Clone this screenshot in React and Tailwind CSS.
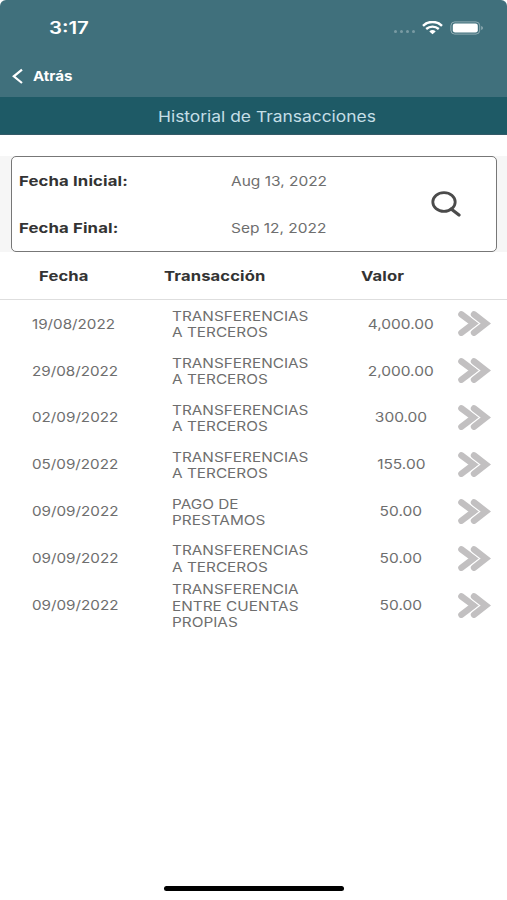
const rows = [
  { date: "19/08/2022", lines: ["TRANSFERENCIAS", "A TERCEROS"], value: "4,000.00" },
  { date: "29/08/2022", lines: ["TRANSFERENCIAS", "A TERCEROS"], value: "2,000.00" },
  { date: "02/09/2022", lines: ["TRANSFERENCIAS", "A TERCEROS"], value: "300.00" },
  { date: "05/09/2022", lines: ["TRANSFERENCIAS", "A TERCEROS"], value: "155.00" },
  { date: "09/09/2022", lines: ["PAGO DE", "PRESTAMOS"], value: "50.00" },
  { date: "09/09/2022", lines: ["TRANSFERENCIAS", "A TERCEROS"], value: "50.00" },
  { date: "09/09/2022", lines: ["TRANSFERENCIA", "ENTRE CUENTAS", "PROPIAS"], value: "50.00" },
];

function StatusBar() {
  return (
    <div className="flex h-[55px] items-center pr-[23px] pl-[49px] text-white">
      <span className="origin-left scale-x-[1.2] pt-[2px] text-[17px] font-semibold">3:17</span>
      <div className="ml-auto flex items-center">
        <div className="mt-2 mr-[7px] flex gap-[3px]">
          {[0, 1, 2, 3].map((i) => (
            <i key={i} className="h-[3px] w-[3px] rounded-full bg-white/30" />
          ))}
        </div>
        <svg className="mr-[7px] h-[14px] w-[21px]" viewBox="0 0 21 14" fill="none" stroke="white">
          <path d="M1 4.8C6.4-.3 14.6-.3 20 4.8" strokeWidth="2.5" />
          <path d="M4.2 8C7.9 4.8 13.1 4.8 16.8 8" strokeWidth="2.4" />
          <path d="M7.3 10.4Q10.5 7.8 13.7 10.4L10.5 13.3Z" fill="white" stroke="none" />
        </svg>
        <svg className="h-[14px] w-[34px]" viewBox="0 0 34 14">
          <rect x=".9" y=".9" width="28.8" height="12.2" rx="3.8" fill="none" stroke="white" strokeOpacity=".42" />
          <rect x="2.8" y="2.5" width="25" height="9" rx="2.3" fill="white" />
          <path d="M31.3 5v4q1.5-.6 1.5-2t-1.5-2" fill="white" opacity=".5" />
        </svg>
      </div>
    </div>
  );
}

function Chevrons() {
  return (
    <svg className="h-[26px] w-[34px]" viewBox="0 0 34 26" fill="none" strokeLinejoin="miter">
      <path d="M4.4 4.4L16.6 13.5L4.4 22.7" stroke="#c2c0c1" strokeWidth="6.4" strokeLinecap="round" />
      <path d="M17 4.4L28.8 13.5L17 22.7" stroke="white" strokeWidth="8.2" strokeLinecap="round" />
      <path d="M17 4.4L28.8 13.5L17 22.7" stroke="#c2c0c1" strokeWidth="6.4" strokeLinecap="round" />
    </svg>
  );
}

export default function App() {
  return (
    <div className="flex h-[900px] w-[507px] flex-col overflow-hidden bg-white font-[Inter,sans-serif] text-[13px] text-[#6e6e6e]">
      <header className="h-[97px] shrink-0 rounded-t-[6px] bg-[#40707c]">
        <StatusBar />
        <div className="flex h-[42px] items-center pl-[12px] text-white">
          <svg className="mr-[10px] h-[16px] w-[11px]" viewBox="0 0 11 16" fill="none" stroke="white" strokeWidth="2.2">
            <path d="M10 1.6L1.8 8.3L10 15" />
          </svg>
          <span className="origin-left scale-x-[1.16] pt-[2px] text-[13px] font-bold">Atrás</span>
        </div>
      </header>
      <div className="flex h-[38px] shrink-0 items-center border-b border-[#345a68] bg-[#1e5a66] pt-[3px] pl-[158px] text-[15px] text-[#c5dfe7]">
        <span className="origin-left scale-x-[1.16]">Historial de Transacciones</span>
      </div>

      <div className="mt-[21px] h-[96px] shrink-0 bg-[#f6f6f6] pr-[10px] pl-[11px]">
        <section className="flex h-[96px] items-center rounded-[5px] border-[1.5px] border-[#777] bg-white pl-[7px]">
          <div className="flex w-[212px] flex-col pt-[2px] text-[13.5px] font-bold text-[#333]">
            <span className="flex h-[47px] items-center">
              <span className="origin-left scale-x-[1.24] tracking-[0.1px]">Fecha Inicial:</span>
            </span>
            <span className="flex h-[47px] items-center">
              <span className="origin-left scale-x-[1.24] tracking-[0.1px]">Fecha Final:</span>
            </span>
          </div>
          <div className="flex w-[199px] flex-col pt-[2px]">
            <span className="flex h-[47px] items-center">
              <span className="origin-left scale-x-[1.19]">Aug 13, 2022</span>
            </span>
            <span className="flex h-[47px] items-center">
              <span className="origin-left scale-x-[1.19]">Sep 12, 2022</span>
            </span>
          </div>
          <svg className="h-[26px] w-[32px]" viewBox="0 0 32 26" fill="none" stroke="#4b4b4b">
            <ellipse cx="14" cy="11" rx="11.2" ry="9.4" strokeWidth="2.8" />
            <path d="M21.2 17.9L29 24" strokeWidth="3.2" strokeLinecap="round" />
          </svg>
        </section>
      </div>

      <div className="flex h-[48px] shrink-0 items-center border-b border-[#dedede] pt-[2px] pl-[39px] text-[13.5px] font-bold text-[#333]">
        <span className="w-[124.5px]"><span className="inline-block origin-left scale-x-[1.23] tracking-[0.1px]">Fecha</span></span>
        <span className="w-[197px]"><span className="inline-block origin-left scale-x-[1.23] tracking-[0.1px]">Transacción</span></span>
        <span><span className="inline-block origin-left scale-x-[1.23] tracking-[0.1px]">Valor</span></span>
      </div>

      <main>
        {rows.map((row, i) => (
          <div key={i} className="flex h-[46.9px] items-center pl-[32px]">
            <span className="w-[140px] shrink-0 pt-[2px]">
              <span className="inline-block origin-left scale-x-[1.17]">{row.date}</span>
            </span>
            <span className="flex w-[169px] shrink-0 flex-col items-start pt-[2px] leading-[16.4px]">
              {row.lines.map((line) => (
                <span key={line} className="origin-left scale-x-[1.18]">{line}</span>
              ))}
            </span>
            <span className="flex w-[120px] shrink-0 justify-center pt-[2px]">
              <span className="scale-x-[1.19]">{row.value}</span>
            </span>
            <span className="-ml-[4px] shrink-0"><Chevrons /></span>
          </div>
        ))}
      </main>

      <div className="mt-auto mb-[9px] ml-[164px] h-[5px] w-[180px] rounded-full bg-black" />
    </div>
  );
}
